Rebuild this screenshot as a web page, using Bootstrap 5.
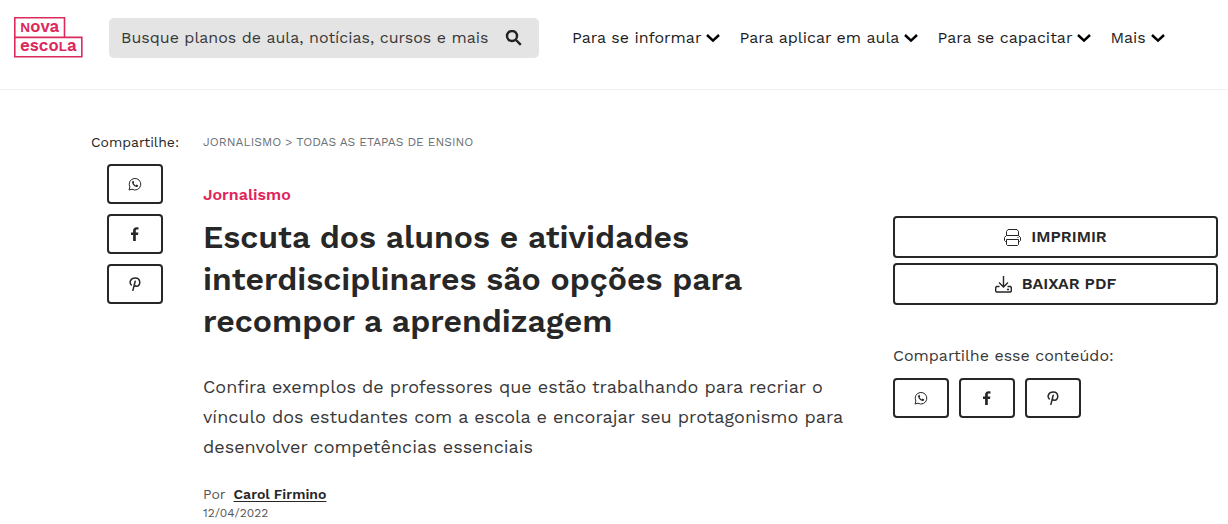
<!DOCTYPE html>
<html lang="pt-BR">
<head>
<meta charset="utf-8">
<meta name="viewport" content="width=device-width, initial-scale=1">
<title>Nova Escola</title>
<link href="https://cdn.jsdelivr.net/npm/bootstrap@5.3.0/dist/css/bootstrap.min.css" rel="stylesheet">
<style>
  :root { --ink: #272727; --soft-ink: #383838; --brand: #dc2a5c; }
  body { font-family: "Work Sans", Inter, "Liberation Sans", sans-serif; font-weight: 400; font-size: 16px; color: var(--ink); background: #fff; }
  a { color: inherit; text-decoration: none; }
  svg { display: block; flex: none; }

  .site-header { min-height: 90px; padding: 17px 14px 30px; border-bottom: 1px solid #f2f2f2; }
  .search-box { width: 430px; height: 40px; margin: 1px 33px 0 26px; padding: 0 17px 0 12px; background: #e4e4e4; border-radius: 5px; }
  .search-box input { font: inherit; color: var(--ink); border: 0; padding: 0; background: transparent; outline: 0; min-width: 0; }
  .search-box input::placeholder { color: var(--soft-ink); opacity: 1; }
  .main-menu { height: 42px; gap: 19px; }
  .main-menu button { border: 0; padding: 0; background: none; color: #1c1c1c; font: inherit; line-height: 24px; white-space: nowrap; gap: 5px; }

  .page-grid { display: grid; grid-template-columns: 90px minmax(0, 1fr) 325px; padding: 42px 10px 0 90px; }
  .article-body { padding: 0 45px 0 23px; }
  .share-label { font-size: 14px; line-height: 20px; margin-bottom: 12px; text-align: center; white-space: nowrap; }
  .share-list { gap: 10px; }
  .line-btn { border: 2px solid var(--ink); border-radius: 4px; background: #fff; color: var(--ink); }
  .share-btn { width: 56px; height: 40px; padding: 0; }
  .action-list { gap: 5px; }
  .action-btn { height: 42px; padding: 0; gap: 10px; font-size: 16px; font-weight: 600; }

  .crumbs { font-size: 12px; line-height: 20px; color: #6b7076; margin-bottom: 32px; }
  .topic { font-size: 16px; font-weight: 600; line-height: 22px; color: #e0245a; margin-bottom: 10px; }
  .headline { font-size: 32px; font-weight: 600; line-height: 42px; margin-bottom: 30px; }
  .summary { font-size: 18px; line-height: 30px; color: var(--soft-ink); margin-bottom: 22px; }
  .byline { font-size: 14px; line-height: 20px; gap: 8px; }
  .byline span, .date { color: #555; }
  .byline a { font-weight: 600; text-decoration: underline; text-underline-offset: 2px; }
  .date { font-size: 12px; line-height: 18px; }
  .actions { padding-top: 84px; }
  .aside-label { line-height: 24px; color: var(--soft-ink); margin: 39px 0 10px; }
</style>
</head>
<body>
<svg class="d-none" aria-hidden="true">
  <symbol id="chevron" viewBox="0 0 14 10"><path d="M1 2l6 5.600L13 2" fill="none" stroke="#000" stroke-width="2.500"/></symbol>
  <symbol id="whatsapp" viewBox="0 0 14 14"><path d="M1 13l.9-3A5.800 5.800 0 1 1 4 12.200z" fill="none" stroke="currentColor" stroke-width="1" stroke-linejoin="round"/><path d="M4.400 4.200l1-.4.800 1.800-.6.7c.5 1 1.200 1.700 2.200 2.100l.7-.8 1.800.8-.4 1.100c-.6.5-1.300.5-2 .2C6 9 4.700 7.500 4.200 5.900c-.2-.7-.1-1.300.2-1.700z" fill="currentColor"/></symbol>
  <symbol id="facebook" viewBox="0 0 14 14"><path d="M5.100 14V8H3V5.500h2.100V3.700C5.100 1.400 6.400.2 8.600.2c.9 0 1.600.1 1.900.2v2.200H9.100c-1 0-1.300.5-1.300 1.300v1.600h2.600L10 8H7.800v6z" fill="currentColor"/></symbol>
  <symbol id="pinterest" viewBox="0 0 14 14"><path d="M3.300 8C1 5.800 2.300 1 7.200 1c6 0 5.700 8.300 1.300 8.300-1.300 0-1.900-.6-2.100-1.300M7.200 4.200L4.900 13.400" fill="none" stroke="currentColor" stroke-width="1.500" stroke-linecap="round"/></symbol>
</svg>

<header class="site-header d-flex align-items-start">
  <a href="#" aria-label="Nova Escola">
    <svg width="69" height="41" viewBox="0 0 69 41">
      <path d="M.8.800h49.700v19.600H.8zM.8 20.400h67v19.300H.8z" fill="none" stroke="#dc2a5c" stroke-width="1.600"/>
      <g fill="#dc2a5c" font-family="'Work Sans', Inter, sans-serif" font-weight="600" font-size="17">
        <text x="6" y="15"><tspan font-size="14">N</tspan>ova</text>
        <text x="6" y="34">esco<tspan font-size="14">L</tspan>a</text>
      </g>
    </svg>
  </a>
  <form class="search-box d-flex align-items-center">
    <input class="flex-grow-1" type="search" aria-label="Buscar" placeholder="Busque planos de aula, notícias, cursos e mais">
    <button type="button" class="border-0 bg-transparent p-0" aria-label="Pesquisar">
      <svg width="17" height="17" viewBox="0 0 17 17" fill="none" stroke="#222" stroke-width="2.400"><circle cx="7" cy="6" r="5"/><path d="M11 10l4.800 4.800"/></svg>
    </button>
  </form>
  <nav class="main-menu d-flex align-items-center">
    <button type="button" class="d-flex align-items-center">Para se informar <svg width="14" height="10"><use href="#chevron"/></svg></button>
    <button type="button" class="d-flex align-items-center">Para aplicar em aula <svg width="14" height="10"><use href="#chevron"/></svg></button>
    <button type="button" class="d-flex align-items-center">Para se capacitar <svg width="14" height="10"><use href="#chevron"/></svg></button>
    <button type="button" class="d-flex align-items-center">Mais <svg width="14" height="10"><use href="#chevron"/></svg></button>
  </nav>
</header>

<main class="page-grid">
  <section>
    <div class="share-label">Compartilhe:</div>
    <div class="share-list d-flex flex-column align-items-center">
      <button type="button" class="line-btn share-btn d-flex align-items-center justify-content-center" aria-label="WhatsApp"><svg width="14" height="14"><use href="#whatsapp"/></svg></button>
      <button type="button" class="line-btn share-btn d-flex align-items-center justify-content-center" aria-label="Facebook"><svg width="14" height="14"><use href="#facebook"/></svg></button>
      <button type="button" class="line-btn share-btn d-flex align-items-center justify-content-center" aria-label="Pinterest"><svg width="14" height="14"><use href="#pinterest"/></svg></button>
    </div>
  </section>

  <article class="article-body">
    <div class="crumbs"><a href="#">JORNALISMO</a> &gt; <a href="#">TODAS AS ETAPAS DE ENSINO</a></div>
    <div class="topic">Jornalismo</div>
    <h1 class="headline">Escuta dos alunos e atividades interdisciplinares são opções para recompor a aprendizagem</h1>
    <p class="summary">Confira exemplos de professores que estão trabalhando para recriar o vínculo dos estudantes com a escola e encorajar seu protagonismo para desenvolver competências essenciais</p>
    <div class="byline d-flex"><span>Por</span><a href="#">Carol Firmino</a></div>
    <div class="date">12/04/2022</div>
  </article>

  <aside class="actions">
    <div class="action-list d-grid">
      <button type="button" class="line-btn action-btn d-flex align-items-center justify-content-center">
        <svg width="17" height="17" viewBox="0 0 17 17" fill="none" stroke="currentColor"><path d="M2.500 6.500v-4l1.500-2h9l1.500 2v4M2.500 12.500h-1l-1-1v-3l2-2h12l2 2v3l-1 1h-1M2.500 10.500h12v5l-1 1h-10l-1-1zM13.500 8.500h1"/></svg>
        IMPRIMIR
      </button>
      <button type="button" class="line-btn action-btn d-flex align-items-center justify-content-center">
        <svg width="17" height="17" viewBox="0 0 17 17" fill="none" stroke="currentColor" stroke-width="1.400"><path d="M8.500 0v11M4 6.500L8.500 11 13 6.500M4.500 10.500h-3l-.8 1v3.700l.8.800h14l.8-.8v-3.700l-.8-1h-3M12 13.500h2"/></svg>
        BAIXAR PDF
      </button>
    </div>
    <div class="aside-label">Compartilhe esse conteúdo:</div>
    <div class="share-list d-flex">
      <button type="button" class="line-btn share-btn d-flex align-items-center justify-content-center" aria-label="WhatsApp"><svg width="14" height="14"><use href="#whatsapp"/></svg></button>
      <button type="button" class="line-btn share-btn d-flex align-items-center justify-content-center" aria-label="Facebook"><svg width="14" height="14"><use href="#facebook"/></svg></button>
      <button type="button" class="line-btn share-btn d-flex align-items-center justify-content-center" aria-label="Pinterest"><svg width="14" height="14"><use href="#pinterest"/></svg></button>
    </div>
  </aside>
</main>
<script src="https://cdn.jsdelivr.net/npm/bootstrap@5.3.0/dist/js/bootstrap.bundle.min.js"></script>
</body>
</html>
